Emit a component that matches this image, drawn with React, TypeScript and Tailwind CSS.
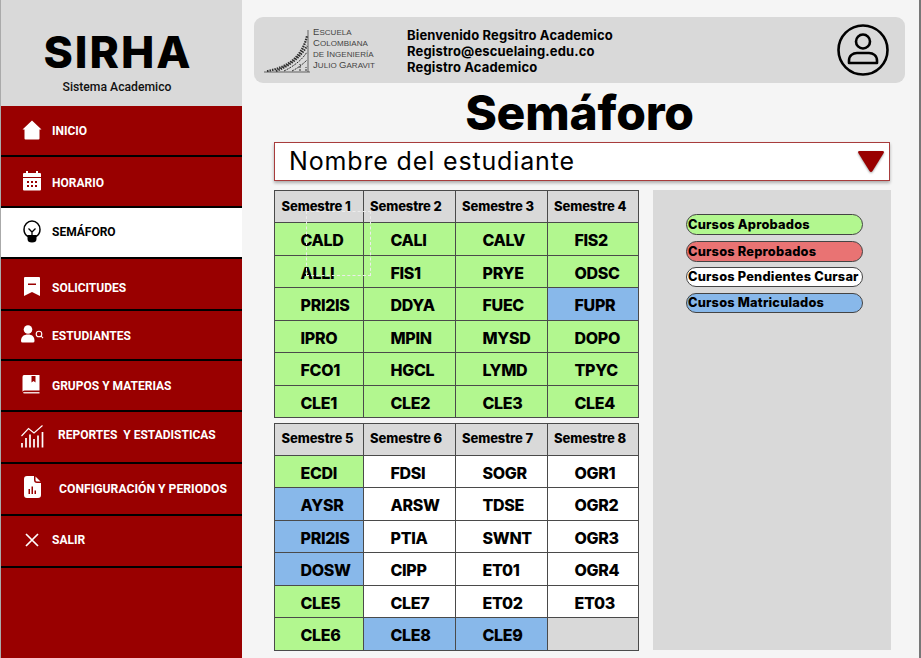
import type { ReactNode } from "react"

const GREEN = "bg-[#b2f78f]"
const BLUE = "bg-[#88b8ea]"
const WHITE = "bg-white"
const GRAY = "bg-[#d9d9d9]"

interface Course {
  code: string
  color: string
}

const g = (code: string): Course => ({ code, color: GREEN })
const b = (code: string): Course => ({ code, color: BLUE })
const w = (code: string): Course => ({ code, color: WHITE })

const topTable = {
  heads: ["Semestre 1", "Semestre 2", "Semestre 3", "Semestre 4"],
  rows: [
    [g("CALD"), g("CALI"), g("CALV"), g("FIS2")],
    [g("ALLI"), g("FIS1"), g("PRYE"), g("ODSC")],
    [g("PRI2IS"), g("DDYA"), g("FUEC"), b("FUPR")],
    [g("IPRO"), g("MPIN"), g("MYSD"), g("DOPO")],
    [g("FCO1"), g("HGCL"), g("LYMD"), g("TPYC")],
    [g("CLE1"), g("CLE2"), g("CLE3"), g("CLE4")],
  ],
}

const bottomTable = {
  heads: ["Semestre 5", "Semestre 6", "Semestre 7", "Semestre 8"],
  rows: [
    [g("ECDI"), w("FDSI"), w("SOGR"), w("OGR1")],
    [b("AYSR"), w("ARSW"), w("TDSE"), w("OGR2")],
    [b("PRI2IS"), w("PTIA"), w("SWNT"), w("OGR3")],
    [b("DOSW"), w("CIPP"), w("ET01"), w("OGR4")],
    [g("CLE5"), w("CLE7"), w("ET02"), w("ET03")],
    [g("CLE6"), b("CLE8"), b("CLE9"), { code: "", color: GRAY }],
  ],
}

const HomeIcon = () => (
  <svg width="20" height="20" viewBox="0 0 20 20" fill="white">
    <path d="M10 0.5 19.5 9.5 17.5 9.5 17.5 18.5Q17.5 19.5 16.5 19.5L3.5 19.5Q2.5 19.5 2.5 18.5L2.5 9.5 0.5 9.5Z" />
  </svg>
)

const CalendarIcon = () => (
  <svg width="18" height="20" viewBox="0 0 18 20" fill="white">
    <rect x="3" y="0" width="2" height="4" />
    <rect x="13" y="0" width="2" height="4" />
    <path d="M1 2H17Q18 2 18 3V6H0V3Q0 2 1 2Z" />
    <path fillRule="evenodd" d="M0 7H18V18.5Q18 19.5 17 19.5H1Q0 19.5 0 18.5ZM4 10V12H6V10ZM8 10V12H10V10ZM12 10V12H14V10ZM4 14V16H6V14ZM8 14V16H10V14ZM12 14V16H14V14Z" />
  </svg>
)

const BulbIcon = () => (
  <svg width="18" height="23" viewBox="0 0 18 23" fill="none" stroke="black">
    <path strokeWidth="1.5" d="M5 16.5C2.5 15 1 12.5 1 9.5 1 5 4.6 1 9 1S17 5 17 9.5C17 12.5 15.5 15 13 16.5" />
    <path strokeWidth="1.3" d="M5.5 8.5 9 12 12.5 8.5M9 12V16" />
    <path fill="black" stroke="none" d="M4.5 15H13.5V19Q13.5 22.5 9 22.5T4.5 19Z" />
  </svg>
)

const BookmarkIcon = () => (
  <svg width="16" height="19" viewBox="0 0 16 19" fill="white">
    <path fillRule="evenodd" d="M1 0H15Q16 0 16 1V19L8 15 0 19V1Q0 0 1 0ZM4 6.5V8H12V6.5Z" />
  </svg>
)

const StudentIcon = () => (
  <svg width="23" height="18" viewBox="0 0 23 18" fill="white">
    <circle cx="7" cy="4.5" r="4.3" />
    <path d="M0 16C0 11.5 3 9.5 7 9.5S13.5 11.5 13.5 16Q13.5 17.5 12 17.5H1.5Q0 17.5 0 16Z" />
    <circle cx="18" cy="9" r="2.8" fill="none" stroke="white" strokeWidth="1.1" />
    <path d="M20 11 22 13.2" stroke="white" strokeWidth="1.1" />
  </svg>
)

const BookIcon = () => (
  <svg width="18" height="20" viewBox="0 0 18 20" fill="white">
    <path fillRule="evenodd" d="M2 0H17.5V15.5H2.5Q0.5 15.5 0.5 17V2Q0.5 0 2 0ZM9.5 1V7.5L11.5 6 13.5 7.5V1Z" />
    <path d="M2.5 17H17.5V18.5H2.5Q1 18.5 1 17.7T2.5 17Z" opacity="0.85" />
  </svg>
)

const ChartIcon = () => (
  <svg width="23" height="23" viewBox="0 0 23 23" fill="none" stroke="white">
    <path strokeWidth="1.1" d="M0.5 11 7.5 3.5 13 8 21.5 0.5" />
    <path strokeWidth="1.7" d="M1 22.5V18M5 22.5V13M9 22.5V9.5M13 22.5V14M17 22.5V10.5M21.5 22.5V7" />
  </svg>
)

const ReportIcon = () => (
  <svg width="17" height="22" viewBox="0 0 17 22" fill="white">
    <path fillRule="evenodd" d="M3 0H10V4Q10 7 13 7H17V19Q17 22 14 22H3Q0 22 0 19V3Q0 0 3 0ZM4.5 13V18H6V13ZM7.5 10.5V18H9V10.5ZM10.5 14.5V18H12V14.5Z" />
    <path d="M11.5 0.5 16.5 5.5H13Q11.5 5.5 11.5 4Z" />
  </svg>
)

const CloseIcon = () => (
  <svg width="14" height="14" viewBox="0 0 14 14" fill="none" stroke="white" strokeWidth="1.7">
    <path d="M1 1 13 13M13 1 1 13" />
  </svg>
)

// each row sits a little differently in the mock, so icon and label have their own nudges
const menu: { label: string; icon: ReactNode; h: string; pad: string; slot: string; iconShift?: string; labelShift?: string; labelSize?: string; active?: boolean }[] = [
  { label: "INICIO", icon: <HomeIcon />, h: "h-[51px]", pad: "pl-[21px]", slot: "w-[30px]", iconShift: "-mt-[2px]", labelShift: "mt-[1px]" },
  { label: "HORARIO", icon: <CalendarIcon />, h: "h-[51px]", pad: "pl-[22px]", slot: "w-[29px]", iconShift: "-mt-[2px]", labelShift: "mt-[3px]" },
  { label: "SEMÁFORO", icon: <BulbIcon />, h: "h-[51px]", pad: "pl-[22px]", slot: "w-[29px]", iconShift: "-mt-[2px]", labelShift: "-mt-[2px]", active: true },
  { label: "SOLICITUDES", icon: <BookmarkIcon />, h: "h-[52px]", pad: "pl-[23px]", slot: "w-[28px]", iconShift: "mt-[5px]", labelShift: "mt-[7px]" },
  { label: "ESTUDIANTES", icon: <StudentIcon />, h: "h-[50px]", pad: "pl-[20px]", slot: "w-[31px]", iconShift: "-mt-[2px]", labelShift: "mt-[2px]" },
  { label: "GRUPOS Y MATERIAS", icon: <BookIcon />, h: "h-[51px]", pad: "pl-[21px]", slot: "w-[30px]", iconShift: "-mt-[2px]" },
  { label: "REPORTES  Y ESTADISTICAS", icon: <ChartIcon />, h: "h-[52px]", pad: "pl-[20px]", slot: "w-[37px]", iconShift: "-mt-[2px]", labelShift: "-mt-[4px]" },
  { label: "CONFIGURACIÓN Y PERIODOS", icon: <ReportIcon />, h: "h-[52px]", pad: "pl-[23px]", slot: "w-[35px]", iconShift: "-mt-[4px]", labelSize: "text-[12.2px]" },
  { label: "SALIR", icon: <CloseIcon />, h: "h-[52px]", pad: "pl-[24px]", slot: "w-[27px]", iconShift: "-mt-[2px]", labelShift: "-mt-[2px]" },
]

const legend = [
  { label: "Cursos Aprobados", color: GREEN, cls: "h-[21px] mb-[6px]" },
  { label: "Cursos Reprobados", color: "bg-[#e97373]", cls: "h-[21px] mb-[5px]" },
  { label: "Cursos Pendientes Cursar", color: WHITE, cls: "h-[20px] mb-[6px]" },
  { label: "Cursos Matriculados", color: BLUE, cls: "h-[20px]" },
]

const colTemplate = "grid grid-cols-[88.5px_92px_92px_91.5px]"

// logo lettering is small caps: the initials are a size up
const Cap = ({ children }: { children: ReactNode }) => <span className="text-[9.5px]">{children}</span>

function SemesterTable({ heads, rows, className }: { heads: string[]; rows: Course[][]; className?: string }) {
  return (
    <div className={`w-[365px] border-t border-l border-[#4a4a4a] ${className ?? ""}`}>
      <div className={`${colTemplate} h-[32px]`}>
        {heads.map((head) => (
          <div
            key={head}
            className="flex items-center pl-[6.5px] bg-[#d9d9d9] border-r border-b border-[#4a4a4a] font-['Inter',sans-serif] font-extrabold text-[13px] tracking-[-0.1px] text-black whitespace-nowrap"
          >
            {head}
          </div>
        ))}
      </div>
      {rows.map((row, i) => (
        <div key={i} className={`${colTemplate} h-[32.5px]`}>
          {row.map((course, j) => (
            <div
              key={j}
              className={`flex items-center pt-[3px] border-r border-b border-[#4a4a4a] font-['Inter',sans-serif] font-extrabold text-[16px] tracking-[-0.3px] text-black ${j === 0 ? "pl-[25.5px]" : "pl-[27px]"} ${course.color}`}
            >
              {course.code}
            </div>
          ))}
        </div>
      ))}
    </div>
  )
}

export default function App() {
  return (
    <div className="flex h-[658px] w-[921px] overflow-hidden bg-[#f5f5f5] border-r-2 border-[#777777]">
      <aside className="flex w-[242px] shrink-0 flex-col border-l border-[#aaaaaa] bg-[#990000]">
        <div className="flex h-[106px] flex-col items-center bg-[#d9d9d9] pr-[7px] pt-[30px]">
          <h1 className="font-['Inter',sans-serif] text-[44.5px] font-extrabold leading-[44px] tracking-[2px] text-black">SIRHA</h1>
          <p className="mt-[4px] font-['Roboto',sans-serif] text-[12.2px] font-medium text-[#111111] pr-[2px]">Sistema Academico</p>
        </div>
        {menu.map((item) => (
          <div
            key={item.label}
            className={`flex items-center ${item.h} ${item.pad} border-b-2 border-black ${item.active ? "bg-white text-black" : "text-white"}`}
          >
            <div className={`flex shrink-0 items-center ${item.slot} ${item.iconShift ?? ""}`}>{item.icon}</div>
            <span className={`whitespace-pre font-['Roboto',sans-serif] font-bold ${item.labelSize ?? "text-[12px]"} ${item.labelShift ?? ""}`}>{item.label}</span>
          </div>
        ))}
      </aside>

      <main className="flex min-w-0 flex-1 flex-col pl-[12px] pt-[17px]">
        <header className="flex h-[66px] w-[651px] items-center rounded-[9px] bg-[#d9d9d9] pl-[10px] pr-[16px]">
          <div className="flex w-[143px] items-end">
            <svg width="46" height="43" viewBox="0 0 46 43" fill="none" stroke="#2f2f2f" className="shrink-0">
              <path strokeWidth="0.7" d="M0 42H46M44 0V42" />
              <path strokeWidth="2.2" strokeDasharray="1.5 1" d="M3 41C22 38 38 28 43 6M12 41C26 36 37 26 43 16" />
              <path strokeWidth="1" strokeDasharray="2 1" d="M20 41C30 36 38 30 43 22M28 41C34 38 39 34 43 30M36 41V34M42 41V37" />
            </svg>
            <div className="mb-[2px] ml-[3px] whitespace-nowrap font-['Liberation_Sans',sans-serif] text-[8px] leading-[10px] tracking-[0.05px] text-[#444444]">
              <div><Cap>E</Cap>SCUELA</div>
              <div><Cap>C</Cap>OLOMBIANA</div>
              <div>DE <Cap>I</Cap>NGENIERÍA</div>
              <div><Cap>J</Cap>ULIO <Cap>G</Cap>ARAVIT</div>
            </div>
          </div>
          <div className="pt-[1px] font-['Inter',sans-serif] text-[13px] font-bold leading-[16px] tracking-[0.15px] text-black">
            <div>Bienvenido Regsitro Academico</div>
            <div>Registro@escuelaing.edu.co</div>
            <div>Registro Academico</div>
          </div>
          <svg width="52" height="52" viewBox="0 0 52 52" fill="none" stroke="black" strokeWidth="2.6" className="ml-auto">
            <circle cx="26" cy="26" r="24.5" />
            <circle cx="26" cy="17.5" r="7" />
            <path d="M12 39V36.5C12 31.5 16 29 20 29H32C36 29 40 31.5 40 36.5V39Z" strokeLinejoin="round" />
          </svg>
        </header>

        <h2 className="mt-[5px] w-[651px] text-center font-['Inter',sans-serif] text-[48px] font-extrabold leading-[49px] tracking-[-0.2px] text-black">Semáforo</h2>

        <div className="ml-[20px] mt-[5px] flex h-[39px] w-[616px] items-center justify-between border border-[#a83c3c] bg-white pl-[14px] pr-[4px] shadow-[0_2px_3px_rgba(0,0,0,0.3)]">
          <span className="font-['Inter',sans-serif] text-[25px] tracking-[0.85px] text-black">Nombre del estudiante</span>
          <svg width="28" height="23" viewBox="0 0 28 23" className="drop-shadow-[0_1px_1px_rgba(0,0,0,0.4)]">
            <path d="M2.5 1H25.5Q27.5 1 26.7 3L15.5 21Q14 23 12.5 21L1.3 3Q0.5 1 2.5 1Z" fill="#990000" />
          </svg>
        </div>

        <div className="ml-[20px] mt-[9px] flex items-start gap-[14px]">
          <div className="relative w-[365px]">
            <SemesterTable heads={topTable.heads} rows={topTable.rows} />
            <SemesterTable heads={bottomTable.heads} rows={bottomTable.rows} className="mt-[4.5px]" />
            <div className="absolute left-[32px] top-[21px] h-[65px] w-[65px] border border-dashed border-[#ececec]" />
          </div>
          <div className="h-[460px] w-[238px] bg-[#d9d9d9] pl-[33px] pt-[24px]">
            {legend.map((item) => (
              <div
                key={item.label}
                className={`flex w-[177px] items-center rounded-full border border-[#444444] pl-[1px] font-['Inter',sans-serif] text-[12.8px] font-extrabold tracking-[0.2px] text-black whitespace-nowrap ${item.color} ${item.cls}`}
              >
                {item.label}
              </div>
            ))}
          </div>
        </div>
      </main>
    </div>
  )
}
